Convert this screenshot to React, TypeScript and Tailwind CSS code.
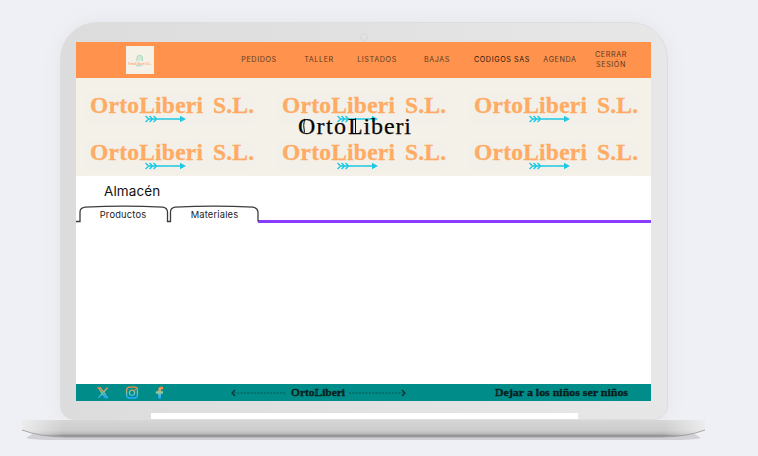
import React from 'react';

const navItems = [
  { label: 'PEDIDOS', box: 'w-[50px] ml-[80px]', tone: 'text-[#5c3a22]' },
  { label: 'TALLER', box: 'w-[50px] ml-[10px]', tone: 'text-[#5c3a22]' },
  { label: 'LISTADOS', box: 'w-[50px] ml-[8px]', tone: 'text-[#5c3a22]' },
  { label: 'BAJAS', box: 'w-[50px] ml-[10px]', tone: 'text-[#5c3a22]' },
  { label: 'CODIGOS SAS', box: 'w-[64px] ml-[8px] whitespace-nowrap', tone: 'text-[#24160d]' },
  { label: 'AGENDA', box: 'w-[46px] ml-[3px]', tone: 'text-[#5c3a22]' },
  { label: 'CERRAR SESIÓN', box: 'w-[40px] ml-[8px]', tone: 'text-[#5c3a22]' },
];

function Wordmark() {
  return (
    <svg className="block h-[47px] w-[192px]" viewBox="0 0 192 47">
      <rect x="8" y="4" width="172" height="32" rx="8" fill="#f3f0ea" />
      <text
        y="23.6" fontSize="23.5" fontWeight="700"
        fontFamily="'Liberation Serif', serif" fill="#ffab63" stroke="#ffab63" strokeWidth="0.3"
      >
        <tspan x="14" textLength="113" lengthAdjust="spacing">OrtoLiberi</tspan>
        <tspan x="137" textLength="41" lengthAdjust="spacing">S.L.</tspan>
      </text>
      <g stroke="#20c8e2" fill="none" strokeWidth="1.4">
        <path d="M69.5 27l3.2 3-3.2 3M73.5 27l3.2 3-3.2 3M77.5 27l3.2 3-3.2 3M72 30h34" />
        <path d="M104 26.8l6 3.2-6 3.2z" fill="#20c8e2" stroke="none" />
      </g>
    </svg>
  );
}

function Brand() {
  return (
    <svg className="block h-[26px] w-[116px]" viewBox="0 0 116 26">
      <text y="20.6" fontSize="24" fontFamily="'Liberation Serif', serif" fill="#080808" stroke="#080808" strokeWidth="0.25">
        <tspan x="1">O</tspan>
        <tspan x="19.5" textLength="29.5" lengthAdjust="spacing">rto</tspan>
        <tspan x="51">L</tspan>
        <tspan x="66.5" textLength="47.5" lengthAdjust="spacing">iberi</tspan>
      </text>
      <path d="M7.5 5.8Q5.9 12.6 7.5 19.6M58.5 5.2v15" stroke="#080808" fill="none" strokeWidth="1" />
    </svg>
  );
}

function Emblem() {
  return (
    <svg className="block h-7 w-7 shrink-0" viewBox="0 0 28 28">
      <rect width="28" height="28" fill="#f6f1e6" />
      <path d="M11 15v-3a2.7 2.7 0 015.4 0v3" fill="#d3ead8" stroke="#a7d8bf" />
      <text x="2" y="18.6" fontSize="4" fontWeight="700" textLength="23.5" lengthAdjust="spacingAndGlyphs" fontFamily="'Liberation Serif', serif" fill="#f5a878">
        OrtoLiberi S.L.
      </text>
      <path d="M10 19.8h6" stroke="#86d3dc" strokeWidth="0.8" />
    </svg>
  );
}

function Social() {
  return (
    <svg className="block h-[13px] w-[70px]" viewBox="0 0 70 13">
      <defs>
        <linearGradient id="social" gradientUnits="userSpaceOnUse" x1="0" y1="1" x2="0" y2="12">
          <stop offset="0.1" stopColor="#ff8a45" />
          <stop offset="0.5" stopColor="#8cc9a0" />
          <stop offset="0.9" stopColor="#25aaff" />
        </linearGradient>
      </defs>
      <g stroke="url(#social)" fill="none" strokeWidth="1.3">
        <path d="M1.4 1.9h2.2l6.8 9.6H8.2zM10.6 1.5L6.9 5.7M5.2 7.5L1.4 11.8" />
        <rect x="29.6" y="1.2" width="10.8" height="10.8" rx="2.8" />
        <circle cx="35" cy="6.7" r="2.6" />
        <path d="M37.6 3.7h1.2" />
      </g>
      <path d="M61.2 12.4V7.7h-2.4V5.2h2.4V3.8C61.2 1.9 62.3.8 64.1.8h1.9v2.5h-1.1c-.7 0-.9.3-.9.9v1h2.2l-.3 2.5H64v4.7z" fill="url(#social)" />
    </svg>
  );
}

function TabOutline() {
  return (
    <svg className="absolute left-0 top-0 h-[20px] w-[184px]" viewBox="0 0 184 20" fill="none" stroke="#3c3c3c" strokeWidth="1.3">
      <path d="M0 17.5h4V8Q4 4 9 3.2Q48 1 87 3.2Q91.3 4 91.5 8V17.5H94.5V8Q94.5 4 99 3.2Q138 1 177 3.2Q181.5 4 182 8V17.5" />
    </svg>
  );
}

function LaptopBase() {
  return (
    <svg className="block h-[24px] w-[683px] shrink-0" viewBox="0 0 683 24">
      <defs>
        <linearGradient id="base" x1="0" y1="0" x2="0" y2="1">
          <stop offset="0" stopColor="#d6d6d6" />
          <stop offset="0.6" stopColor="#cdcdcd" />
          <stop offset="0.82" stopColor="#b8b8b8" />
          <stop offset="0.93" stopColor="#8c8c8c" />
          <stop offset="1" stopColor="#a5a5a5" />
        </linearGradient>
        <linearGradient id="edges" x1="0" y1="0" x2="1" y2="0">
          <stop offset="0" stopColor="#f3f3f3" stopOpacity="0.8" />
          <stop offset="0.06" stopColor="#f3f3f3" stopOpacity="0" />
          <stop offset="0.94" stopColor="#f3f3f3" stopOpacity="0" />
          <stop offset="1" stopColor="#f3f3f3" stopOpacity="0.8" />
        </linearGradient>
      </defs>
      <path d="M12 13H671L679 18Q670 20 650 20H33Q13 20 4 18z" fill="#d0d0d6" />
      <path d="M0 0H683V10Q664 17 640 17H43Q19 17 0 10z" fill="url(#base)" />
      <path d="M0 0H683V10Q664 17 640 17H43Q19 17 0 10z" fill="url(#edges)" />
      <path d="M0 10Q19 17 43 17H640Q664 17 683 10" fill="none" stroke="#989898" strokeWidth="0.8" />
    </svg>
  );
}

export default function App() {
  return (
    <div className="flex h-[456px] w-[758px] flex-col items-center overflow-hidden bg-[#eff0f5] pr-[31px] pt-[22px] [font-family:Inter,'Noto_Sans',sans-serif]">
      <div className="flex h-[398px] w-[608px] shrink-0 flex-col items-center rounded-t-[37px] rounded-b-[14px] border border-[#dedee0] bg-linear-to-r from-[#dcdcdc] to-[#e7e7e7] shadow-[0_0_18px_#e4e5e9]">
        <div className="flex h-[19px] w-full shrink-0 items-end justify-center pb-[1px]">
          <span className="h-2 w-2 rounded-full border border-[#d8d8d8]" />
        </div>
        <div className="flex h-[359px] w-[575px] shrink-0 flex-col bg-white">
          <nav className="flex h-9 shrink-0 items-center bg-[#ff924d] pl-[50px]">
            <Emblem />
            <div className="flex items-center">
              {navItems.map((item) => (
                <a key={item.label} className={`${item.box} ${item.tone} text-center text-[7.2px] leading-[10px] tracking-[0.6px]`}>
                  {item.label}
                </a>
              ))}
            </div>
          </nav>
          <header className="relative h-[98px] shrink-0 overflow-hidden bg-[#f4f1e8] pt-[11px]">
            <div className="grid w-[576px] grid-cols-3">
              {[0, 1, 2, 3, 4, 5].map((tile) => (
                <Wordmark key={tile} />
              ))}
            </div>
            <h1 className="absolute left-[221px] top-[35px]">
              <Brand />
            </h1>
          </header>
          <main className="flex min-h-0 flex-1 flex-col">
            <h2 className="mt-[5px] h-[20px] pl-[28px] text-[13.5px] leading-[20px] tracking-[0.1px] text-[#111111]">Almacén</h2>
            <div className="relative mt-[3px] flex h-[20px]">
              <TabOutline />
              <span className="ml-[4px] w-[86px] text-center text-[9.3px] leading-[21px] tracking-[0.2px] text-[#222222]">Productos</span>
              <span className="ml-[5px] w-[87px] text-center text-[9.3px] leading-[21px] tracking-[0.2px] text-[#222222]">Materiales</span>
              <span className="mt-[16px] h-[3px] flex-1 bg-[#8b3dff]" />
            </div>
          </main>
          <footer className="flex h-[17px] shrink-0 items-center bg-[#008c89] pl-[21px]">
            <Social />
            <svg className="ml-[63px] block h-[17px] w-[178px]" viewBox="0 0 178 17">
              <path d="M5 6L2 9l3 3M172 6l3 3-3 3" fill="none" stroke="#092d2c" strokeWidth="1.2" />
              <path d="M4 9h51M119 9h54" stroke="#06504e" strokeWidth="0.9" strokeDasharray="2 1.3" />
              <text x="61" y="12" fontSize="10.5" fontWeight="700" textLength="54" lengthAdjust="spacingAndGlyphs" fontFamily="'Liberation Serif', serif" fill="#071e1d" stroke="#071e1d" strokeWidth="0.3">OrtoLiberi</text>
              <path d="M63.6 6.4v4.4M86.6 6v5.2" stroke="#008c89" strokeWidth="0.5" />
            </svg>
            <svg className="ml-[86px] block h-[17px] w-[136px]" viewBox="0 0 136 17">
              <text x="1" y="12" fontSize="10.5" fontWeight="700" textLength="133" lengthAdjust="spacingAndGlyphs" fontFamily="'Liberation Serif', serif" fill="#071e1d" stroke="#071e1d" strokeWidth="0.3">Dejar a los niños ser niños</text>
              <path d="M3.6 5.8v5.4" stroke="#008c89" strokeWidth="0.6" />
            </svg>
          </footer>
        </div>
        <div className="ml-[2px] mt-[12px] h-[7px] w-[427px] bg-white" />
      </div>
      <LaptopBase />
    </div>
  );
}
